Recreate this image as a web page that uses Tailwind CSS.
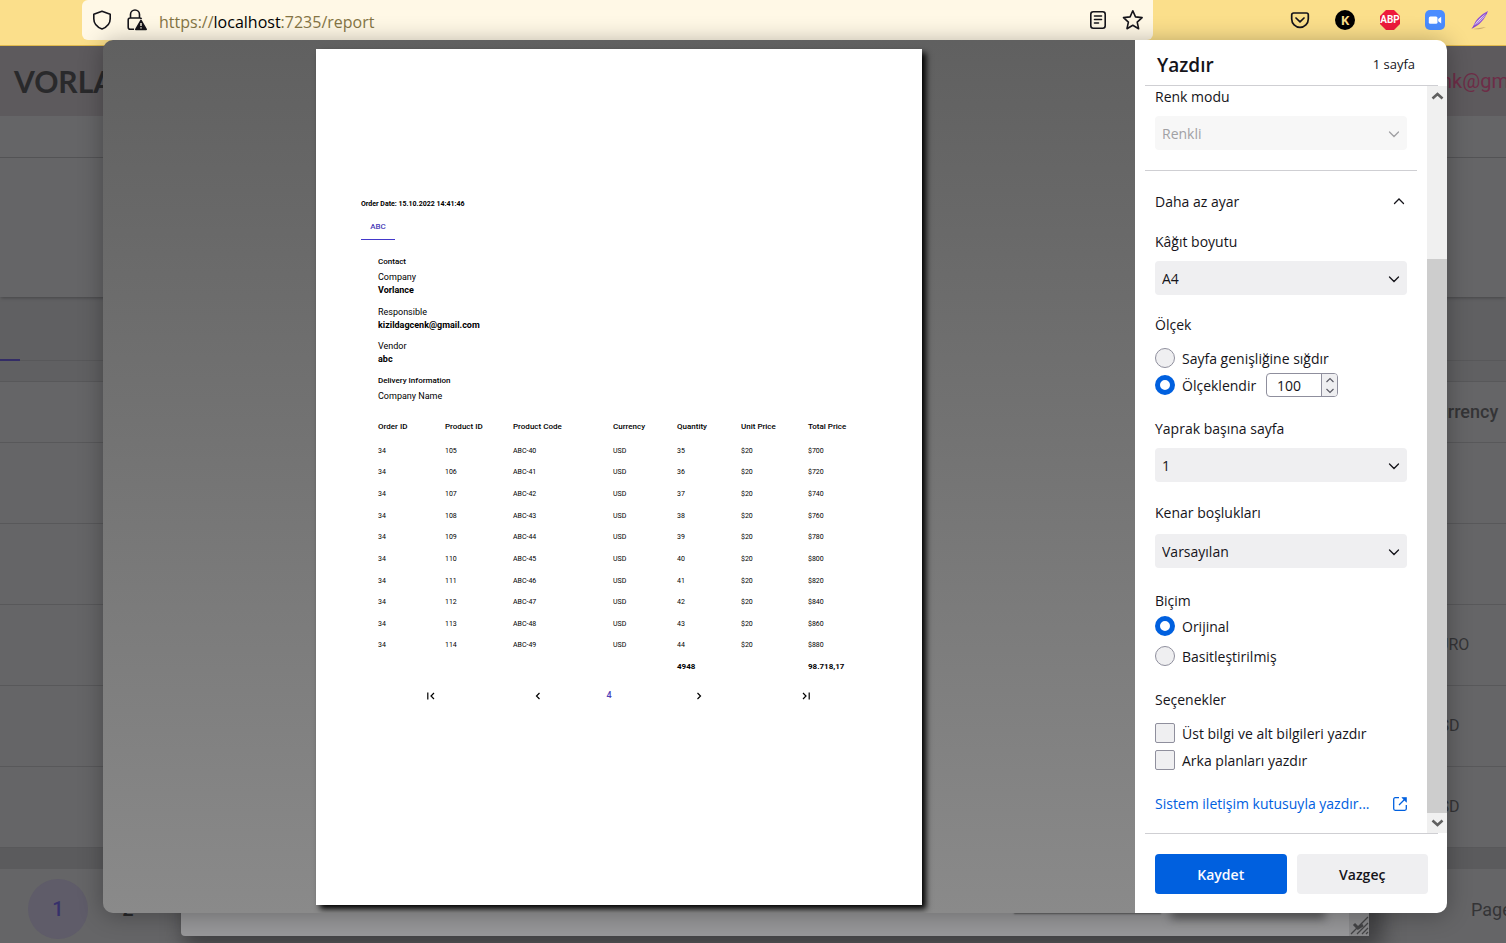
<!DOCTYPE html>
<html lang="tr">
<head>
  <meta charset="UTF-8" />
  <meta name="viewport" content="width=device-width, initial-scale=1" />
  <title>Yazdır</title>
  <script src="https://cdn.jsdelivr.net/npm/@tailwindcss/browser@4"></script>
</head>
<body class="relative flex h-screen flex-col overflow-hidden bg-[#656567] font-['Open_Sans',sans-serif] text-sm text-[#15141a]">

  <!-- Browser toolbar -->
  <header class="flex h-[46px] shrink-0 items-start border-b border-[#e0b94d] bg-[#fbdf8b]">
    <div class="ml-[82px] flex h-10 flex-1 items-center rounded-b-md rounded-tl-md bg-[#fff8e6] px-2.5">
      <button aria-label="İzlenme koruması" class="size-5">
        <svg viewBox="0 0 20 20" class="size-5" fill="none" stroke="#15141a" stroke-width="1.6" stroke-linejoin="round"><path d="M10 1.2 18.2 4.2v4.6c0 4.6-3.4 8.4-8.2 10.2C5.2 17.2 1.8 13.4 1.8 8.8V4.200z"/></svg>
      </button>
      <button aria-label="Site bilgileri" class="ml-3 size-6">
        <svg viewBox="0 0 24 24" class="size-6" fill="none" stroke="#15141a" stroke-width="1.6"><path d="M6.500 10V6.500a4.500 4.500 0 0 1 9 0V10M10 21.200H6.200a2 2 0 0 1-2-2V12a2 2 0 0 1 2-2h9.600a2 2 0 0 1 1.700 1"/><path d="m17 12.500 5.200 8.900H11.800z" fill="#15141a" stroke-linejoin="round"/><path d="M17 15v3M17 19.300v1.200" stroke="#fff8e6" stroke-width="1.4"/></svg>
      </button>
      <div role="textbox" contenteditable="true" spellcheck="false" aria-label="Adres" class="ml-[11px] flex-1 pt-[3px] text-base/6 text-[#857545]">https://<span class="text-black">localhost</span>:7235/report</div>
      <button aria-label="Okuyucu görünümü" class="size-5">
        <svg viewBox="0 0 20 20" class="size-5" fill="none" stroke="#15141a" stroke-width="1.6" stroke-linecap="round"><rect x="3.800" y="1.800" width="14.400" height="16.400" rx="2.500"/><path d="M7.500 6h7M7.500 9.500h7M7.500 13h4"/></svg>
      </button>
      <button aria-label="Yer imlerine ekle" class="ml-3.5 size-[22px]">
        <svg viewBox="0 0 22 22" class="size-[22px]" fill="none" stroke="#15141a" stroke-width="1.6" stroke-linejoin="round"><path d="m11.800 1.800 2.700 6.100 6.600.7-4.900 4.500 1.400 6.600-5.800-3.400-5.800 3.400 1.400-6.600-4.900-4.500 6.600-.7z"/></svg>
      </button>
    </div>
    <div class="flex h-10 w-[353px] items-center justify-end gap-[25px] pr-4">
      <button aria-label="Pocket" class="size-5">
        <svg viewBox="0 0 20 20" class="size-5" fill="none" stroke="#15141a" stroke-width="1.7" stroke-linecap="round" stroke-linejoin="round"><path d="M3.500 3h13a1.800 1.800 0 0 1 1.800 1.800V9a8.300 8.300 0 0 1-16.600 0V4.800A1.800 1.800 0 0 1 3.500 3z"/><path d="m6 8 4 3.800L14 8"/></svg>
      </button>
      <button class="size-5 rounded-full bg-black text-[13px]/5 font-bold text-[#fbdf8b]">K</button>
      <button class="size-5 bg-[#ee1a3c] text-center font-['Roboto'] text-[10px]/5 font-bold text-white [clip-path:polygon(30%_0,70%_0,100%_30%,100%_70%,70%_100%,30%_100%,0_70%,0_30%)]">ABP</button>
      <button aria-label="Zoom" class="size-5">
        <svg viewBox="0 0 20 20" class="size-5"><rect width="20" height="20" rx="5" fill="#4a8cff"/><rect x="3.800" y="6.500" width="8.700" height="7.300" rx="1.500" fill="#fff"/><path d="m13.200 9 3-2.300v6.900l-3-2.300z" fill="#fff"/></svg>
      </button>
      <button aria-label="Tüy kalem" class="size-5">
        <svg viewBox="0 0 20 20" class="size-5"><path d="M3 19c4 .8 9 0 13-2-5 1-8 1-13 2z" fill="#c9a86a"/><path d="M18 1C12 4 6.500 9 4.500 13.500L2 18.500C9 16 15 9 18 1z" fill="#8f4fd0"/><path d="M17 3C12 6 7 10.500 4 15.500c1.500 0 9-5.500 13-12.500z" fill="#e6d6f8"/><path d="M17 3 2 18.500" stroke="#7a3dbd" stroke-width=".7"/></svg>
      </button>
    </div>
  </header>

  <!-- Dimmed page under the dialogs -->
  <main class="flex flex-1 flex-col overflow-hidden font-['Roboto',sans-serif]" aria-hidden="true">
    <div class="flex h-[70px] shrink-0 items-center justify-between bg-[#5d5a5d]">
      <span class="pl-3.5 font-['Lato'] text-3xl/8 font-bold text-[#29292b]">VORLANCE</span>
      <span class="w-[86px] text-xl/7 text-[#6d2d47]">cenk@gm</span>
    </div>
    <div class="h-[42px] shrink-0 border-b border-[#545456]"></div>
    <div class="z-0 h-[139px] shrink-0 shadow-[0_2px_3px_-1px_#454547]"></div>
    <div class="h-16 shrink-0 border-b border-[#58585a] bg-[#606062]"><div class="mt-[62px] h-0.5 w-5 bg-[#332c66]"></div></div>
    <div class="h-[21px] shrink-0 border-b border-[#58585a] bg-[#606062]"></div>
    <table class="w-full shrink-0 table-fixed text-left text-base text-[#343436]">
      <colgroup><col><col class="w-[81px]"></colgroup>
      <thead>
        <tr class="h-[60px] border-b border-[#58585a] text-lg"><th></th><th class="pl-px font-medium">Currency</th></tr>
      </thead>
      <tbody>
        <tr class="h-[81px] border-b border-[#58585a]"><td></td><td></td></tr>
        <tr class="h-[81px] border-b border-[#58585a]"><td></td><td></td></tr>
        <tr class="h-[81px] border-b border-[#58585a]"><td></td><td class="pl-1">EURO</td></tr>
        <tr class="h-[81px] border-b border-[#58585a]"><td></td><td class="pl-1">USD</td></tr>
        <tr class="h-[81px] border-b border-[#58585a]"><td></td><td class="pl-1">USD</td></tr>
      </tbody>
    </table>
    <div class="h-[21px] shrink-0 bg-[#5b5b5d]"></div>
    <div class="flex flex-1 items-center pt-1.5 pl-7 text-lg">
      <span class="size-[60px] shrink-0 rounded-full bg-[#5f5c69] text-center text-xl/[60px] font-medium text-[#37316b]">1</span>
      <span class="w-20 text-center text-xl font-medium text-[#29292b]">2</span>
      <span class="ml-auto w-[35px] pt-0.5 text-[#343436]">Page</span>
    </div>
  </main>

  <!-- Report window behind the print dialog -->
  <div class="absolute right-[137px] bottom-[7px] left-[181px] flex h-20 items-end justify-end rounded-b bg-[#979799] shadow-[8px_8px_20px_6px_#424244]">
    <div class="mr-3 mb-[23px] h-2 w-[147px] shadow-[0_1px_2px_#5a5a5c]"></div>
    <div class="mr-[26px] mb-[23px] h-2 w-[150px] shadow-[0_4px_10px_2px_#5a5a5c]"></div>
    <svg viewBox="0 0 20 24" class="h-6 w-5 bg-[#89898b]" fill="none" stroke="#444446" stroke-width="1.3"><path d="M2 22 19 5M8 22l11-11M13 22l6-6M17 22l2-2"/><path d="m5 12 4 4 5-3" stroke-width="3"/></svg>
  </div>

  <!-- Print dialog -->
  <div role="dialog" aria-label="Yazdır" class="absolute top-10 right-[59px] bottom-[30px] left-[103px] flex overflow-hidden rounded-[10px] shadow-[0_2px_24px_rgba(0,0,0,0.3)]">

    <!-- Preview -->
    <section class="flex flex-1 justify-center bg-linear-to-b from-[#606060] to-[#8a8a8a] pt-[9px] pb-2">
      <div class="aspect-[606/856] h-full bg-white px-[45px] pt-[149px] font-['Roboto',sans-serif] text-[9px]/[13px] text-black shadow-[4px_4px_6px_#000]">
        <p class="text-[7px]/[13px] font-bold">Order Date: 15.10.2022 14:41:46</p>
        <div class="mt-1.5 inline-block border-b border-[#4338ca] px-2 pt-[3px] pb-1.5 text-[8px]/[13px] font-medium text-[#4a3db8]"><span class="inline-block w-[18px] text-center">ABC</span></div>
        <div class="mt-[15px] px-[17px]">
          <h2 class="text-[8px]/[13px] font-medium">Contact</h2>
          <p class="mt-[3px]">Company</p>
          <p class="font-bold">Vorlance</p>
          <p class="mt-[9px]">Responsible</p>
          <p class="font-bold">kizildagcenk@gmail.com</p>
          <p class="mt-2">Vendor</p>
          <p class="font-bold">abc</p>
          <h2 class="mt-2 text-[8px]/[13px] font-medium">Delivery Information</h2>
          <p class="mt-[3px]">Company Name</p>

          <table class="mt-2.5 h-[265px] w-full table-fixed text-left text-[7px]/[10px]">
            <colgroup><col class="w-[67px]"><col class="w-[68px]"><col class="w-[100px]"><col class="w-16"><col class="w-16"><col class="w-[67px]"><col></colgroup>
            <thead>
              <tr class="h-[27px] text-[8px]/[10px]">
                <th class="font-medium">Order ID</th><th class="font-medium">Product ID</th><th class="font-medium">Product Code</th><th class="font-medium">Currency</th><th class="font-medium">Quantity</th><th class="font-medium">Unit Price</th><th class="font-medium">Total Price</th>
              </tr>
            </thead>
            <tbody>
              <tr><td>34</td><td>105</td><td>ABC-40</td><td>USD</td><td>35</td><td>$20</td><td>$700</td></tr>
              <tr><td>34</td><td>106</td><td>ABC-41</td><td>USD</td><td>36</td><td>$20</td><td>$720</td></tr>
              <tr><td>34</td><td>107</td><td>ABC-42</td><td>USD</td><td>37</td><td>$20</td><td>$740</td></tr>
              <tr><td>34</td><td>108</td><td>ABC-43</td><td>USD</td><td>38</td><td>$20</td><td>$760</td></tr>
              <tr><td>34</td><td>109</td><td>ABC-44</td><td>USD</td><td>39</td><td>$20</td><td>$780</td></tr>
              <tr><td>34</td><td>110</td><td>ABC-45</td><td>USD</td><td>40</td><td>$20</td><td>$800</td></tr>
              <tr><td>34</td><td>111</td><td>ABC-46</td><td>USD</td><td>41</td><td>$20</td><td>$820</td></tr>
              <tr><td>34</td><td>112</td><td>ABC-47</td><td>USD</td><td>42</td><td>$20</td><td>$840</td></tr>
              <tr><td>34</td><td>113</td><td>ABC-48</td><td>USD</td><td>43</td><td>$20</td><td>$860</td></tr>
              <tr><td>34</td><td>114</td><td>ABC-49</td><td>USD</td><td>44</td><td>$20</td><td>$880</td></tr>
              <tr class="text-[8px]/[10px] font-bold"><td></td><td></td><td></td><td></td><td>4948</td><td></td><td>98.718,17</td></tr>
            </tbody>
          </table>

          <nav class="mt-[11px] grid grid-cols-[105px_109px_34px_146px_68px] items-center justify-items-center">
            <button aria-label="First"><svg viewBox="0 0 8 8" class="size-2" fill="none" stroke="#000" stroke-width="1.2"><path d="M.8.500v7M7 1 4 4l3 3"/></svg></button>
            <button aria-label="Previous"><svg viewBox="0 0 8 8" class="size-2" fill="none" stroke="#000" stroke-width="1.2"><path d="M5.500 1l-3 3 3 3"/></svg></button>
            <span class="font-medium text-[#4a3db8]">4</span>
            <button aria-label="Next"><svg viewBox="0 0 8 8" class="size-2" fill="none" stroke="#000" stroke-width="1.2"><path d="M2.500 1l3 3-3 3"/></svg></button>
            <button aria-label="Last"><svg viewBox="0 0 8 8" class="size-2" fill="none" stroke="#000" stroke-width="1.2"><path d="M7.200.500v7M1 1l3 3-3 3"/></svg></button>
          </nav>
        </div>
      </div>
    </section>

    <!-- Settings -->
    <form class="flex w-[312px] shrink-0 flex-col bg-white">
      <div class="mr-[9px] ml-2.5 flex h-[46px] shrink-0 items-center justify-between border-b border-[#cfcfd3] pt-1 pr-[23px] pl-3">
        <h1 class="text-[19px]/7 font-semibold">Yazdır</h1>
        <span class="text-[13px]">1 sayfa</span>
      </div>

      <div class="flex min-h-0 flex-1">
        <div class="flex-1 overflow-hidden px-2.5 leading-5">
          <div class="border-b border-[#cfcfd3] px-2.5 pt-px pb-5">
            <label for="color" class="block">Renk modu</label>
            <div class="relative mt-[9px]">
              <select id="color" disabled class="block h-[34px] w-full appearance-none rounded bg-[#f7f7f7] px-[7px] pt-0.5 text-[#a1a1a4] opacity-100"><option>Renkli</option></select>
              <svg viewBox="0 0 12 12" class="pointer-events-none absolute top-3 right-[7px] size-3" fill="none" stroke="#a1a1a4" stroke-width="1.3" stroke-linecap="round"><path d="m1.500 4 4.500 4.500L10.500 4"/></svg>
            </div>
          </div>
          <div class="px-2.5">
            <button type="button" class="mt-[21px] flex w-full items-center justify-between">Daha az ayar
              <svg viewBox="0 0 12 12" class="mr-0.5 size-3" fill="none" stroke="#15141a" stroke-width="1.3" stroke-linecap="round"><path d="M1.500 7.500 6 3 10.500 7.500"/></svg>
            </button>

            <label for="paper" class="mt-5 block">Kâğıt boyutu</label>
            <div class="relative mt-[9px]">
              <select id="paper" class="block h-[34px] w-full appearance-none rounded bg-[#efeff1] px-[7px] pt-0.5"><option>A4</option></select>
              <svg viewBox="0 0 12 12" class="pointer-events-none absolute top-3 right-[7px] size-3" fill="none" stroke="#15141a" stroke-width="1.3" stroke-linecap="round"><path d="m1.500 4 4.500 4.500L10.500 4"/></svg>
            </div>

            <fieldset class="mt-5">
              <legend>Ölçek</legend>
              <label class="mt-[13px] flex h-5 items-center gap-[7px]"><input type="radio" name="scale" class="size-5 appearance-none rounded-full border border-[#8f8f9d] bg-[#efeff1] checked:border-5 checked:border-[#0060df] checked:bg-white"><span class="pt-0.5">Sayfa genişliğine sığdır</span></label>
              <div class="mt-[5px] flex h-6 items-center">
                <label class="flex h-5 items-center gap-[7px]"><input type="radio" name="scale" checked class="size-5 appearance-none rounded-full border border-[#8f8f9d] bg-[#efeff1] checked:border-5 checked:border-[#0060df] checked:bg-white"><span class="pt-0.5">Ölçeklendir</span></label>
                <div class="ml-auto mr-[69px] flex h-6 w-[72px] overflow-hidden rounded border border-[#8f8f9d]">
                  <input type="number" value="100" aria-label="Ölçek yüzdesi" class="w-[54px] [appearance:textfield] pt-0.5 pl-2.5 [&::-webkit-inner-spin-button]:appearance-none">
                  <div class="flex flex-1 flex-col border-l border-[#8f8f9d] bg-[#efeff1]">
                    <button type="button" aria-label="Artır" class="flex flex-1 items-center justify-center"><svg viewBox="0 0 8 8" class="size-2" fill="none" stroke="#5b5b66" stroke-width="1.2"><path d="M.5 6 4 2.500 7.500 6"/></svg></button>
                    <button type="button" aria-label="Azalt" class="flex flex-1 items-center justify-center"><svg viewBox="0 0 8 8" class="size-2" fill="none" stroke="#5b5b66" stroke-width="1.2"><path d="M.5 2 4 5.500 7.500 2"/></svg></button>
                  </div>
                </div>
              </div>
            </fieldset>

            <label for="sheets" class="mt-[22px] block">Yaprak başına sayfa</label>
            <div class="relative mt-[9px]">
              <select id="sheets" class="block h-[34px] w-full appearance-none rounded bg-[#efeff1] px-[7px] pt-0.5"><option>1</option></select>
              <svg viewBox="0 0 12 12" class="pointer-events-none absolute top-3 right-[7px] size-3" fill="none" stroke="#15141a" stroke-width="1.3" stroke-linecap="round"><path d="m1.500 4 4.500 4.500L10.500 4"/></svg>
            </div>

            <label for="margins" class="mt-[21px] block">Kenar boşlukları</label>
            <div class="relative mt-[11px]">
              <select id="margins" class="block h-[34px] w-full appearance-none rounded bg-[#efeff1] px-[7px] pt-0.5"><option>Varsayılan</option></select>
              <svg viewBox="0 0 12 12" class="pointer-events-none absolute top-3 right-[7px] size-3" fill="none" stroke="#15141a" stroke-width="1.3" stroke-linecap="round"><path d="m1.500 4 4.500 4.500L10.500 4"/></svg>
            </div>

            <fieldset class="mt-[23px]">
              <legend>Biçim</legend>
              <label class="mt-[5px] flex h-5 items-center gap-[7px]"><input type="radio" name="format" checked class="size-5 appearance-none rounded-full border border-[#8f8f9d] bg-[#efeff1] checked:border-5 checked:border-[#0060df] checked:bg-white"><span class="pt-0.5">Orijinal</span></label>
              <label class="mt-2.5 flex h-5 items-center gap-[7px]"><input type="radio" name="format" class="size-5 appearance-none rounded-full border border-[#8f8f9d] bg-[#efeff1] checked:border-5 checked:border-[#0060df] checked:bg-white"><span class="pt-0.5">Basitleştirilmiş</span></label>
            </fieldset>

            <fieldset class="mt-6">
              <legend>Seçenekler</legend>
              <label class="mt-[13px] flex h-5 items-center gap-[7px]"><input type="checkbox" class="size-5 appearance-none rounded-xs border border-[#8f8f9d] bg-[#efeff1] checked:bg-[#0060df]"><span class="pt-0.5">Üst bilgi ve alt bilgileri yazdır</span></label>
              <label class="mt-[7px] flex h-5 items-center gap-[7px]"><input type="checkbox" class="size-5 appearance-none rounded-xs border border-[#8f8f9d] bg-[#efeff1] checked:bg-[#0060df]"><span class="pt-0.5">Arka planları yazdır</span></label>
            </fieldset>

            <a href="#" class="mt-6 flex items-center justify-between text-[#0060df]">Sistem iletişim kutusuyla yazdır...
              <svg viewBox="0 0 14 14" class="size-3.5" fill="none" stroke="#0060df" stroke-width="1.3" stroke-linejoin="round"><path d="M6 .7H2.200A1.500 1.500 0 0 0 .7 2.200v9.600a1.500 1.500 0 0 0 1.500 1.500h9.600a1.500 1.500 0 0 0 1.500-1.500V8M6 8l6-6"/><path d="M8.800.500h4.700v4.700z" fill="#0060df" stroke-width=".6"/></svg>
            </a>
          </div>
        </div>

        <!-- Scrollbar -->
        <div class="flex w-5 flex-col items-center bg-[#f0f0f0]">
          <svg viewBox="0 0 20 20" class="size-5 shrink-0" fill="none" stroke="#606060" stroke-width="2.6"><path d="m5.500 12.500 5-4.500 5 4.500"/></svg>
          <div class="mt-[153px] w-full flex-1 bg-[#cdcdcd]"></div>
          <svg viewBox="0 0 20 20" class="size-5 shrink-0" fill="none" stroke="#606060" stroke-width="2.6"><path d="m5.500 7.500 5 4.500 5-4.500"/></svg>
        </div>
      </div>

      <div class="mr-[9px] ml-2.5 flex h-20 shrink-0 gap-2.5 border-t border-[#cfcfd3] px-2.5 pt-5">
        <button type="submit" class="h-10 flex-1 rounded bg-[#0060df] pt-0.5 font-semibold text-[#fbfbfe]">Kaydet</button>
        <button type="button" class="h-10 flex-1 rounded bg-[#efeff1] pt-0.5 font-semibold">Vazgeç</button>
      </div>
    </form>
  </div>
</body>
</html>
